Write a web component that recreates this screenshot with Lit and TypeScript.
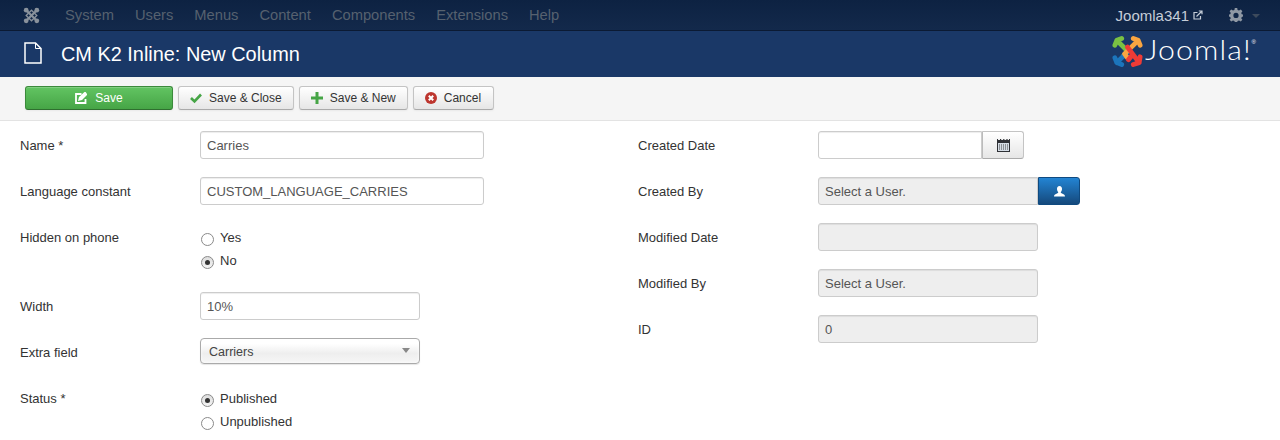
import { LitElement, html, css, svg } from 'lit';
import { customElement } from 'lit/decorators.js';

// joomla mark, four interlocking arms
const joomlaMark = (a: string, b: string, c: string, d: string) => svg`
  <g fill="none" stroke-linecap="round" stroke-linejoin="round" stroke-width="5">
    <path stroke="${a}" d="M3 10 L5 5 L10 3 M5 5 L16 16 L12 21" />
    <path stroke="${c}" d="M3 23 L5 28 L10 30 M5 28 L18 15" />
    <path stroke="${b}" d="M22 3 L27 5 L29 10 M27 5 L13 19 L16 23" />
    <path stroke="${d}" d="M29 22 L28 28 L22 30 M28 28 L16 12 M21 20 L17 25" />
  </g>
`;

const menu = ['System', 'Users', 'Menus', 'Content', 'Components', 'Extensions', 'Help'];

@customElement('app-root')
export class AppRoot extends LitElement {
  static styles = css`
    :host {
      display: block;
      width: 1280px;
      height: 440px;
      overflow: hidden;
      background: #fff;
      font-family: 'Liberation Sans', Arial, sans-serif;
      font-size: 13px;
      color: #333;
    }

    /* top bar */
    .navbar {
      height: 30px;
      display: flex;
      align-items: center;
      padding: 0 20px 0 23px;
      background: linear-gradient(to bottom, #0d2242, #13294b);
      border-bottom: 1px solid #0b1a33;
    }
    .brand { width: 17px; height: 17px; display: block; }
    .menu {
      display: flex;
      gap: 21px;
      margin-left: 25px;
      font-size: 14.7px;
      color: #56616f;
    }
    .right {
      margin-left: auto;
      display: flex;
      align-items: center;
      font-size: 15px;
      color: #c5cdd8;
    }
    .ext { width: 10px; height: 10px; margin-left: 4px; }
    .gear { width: 14px; height: 14px; margin-left: 26px; }
    .caret {
      margin-left: 9px;
      margin-top: 2px;
      border: 4px solid transparent;
      border-top-color: #3d4a5c;
      border-bottom: 0;
    }

    /* title bar */
    .header {
      height: 46px;
      display: flex;
      align-items: center;
      padding: 0 24px 0 24px;
      background: #1a3867;
      color: #fff;
    }
    .page-icon { width: 18px; height: 22px; margin-right: 19px; margin-top: -3px; }
    .title { font-size: 19.9px; line-height: 24px; margin-top: -1px; }
    .logo {
      margin-left: auto;
      display: flex;
      align-items: flex-start;
      margin-top: -6px;
    }
    .logo svg { width: 31px; height: 32px; }
    .wordmark {
      font-family: Lato, 'Liberation Sans', sans-serif;
      font-weight: 300;
      font-size: 27px;
      line-height: 30px;
      margin-left: 2px;
      letter-spacing: 1px;
      transform: scaleX(1.12);
      transform-origin: left;
    }
    .reg { font-size: 6px; line-height: 8px; margin: 3px 0 0 11px; }

    /* toolbar */
    .toolbar {
      display: flex;
      align-items: flex-start;
      gap: 5px;
      padding: 9px 0 0 25px;
      box-sizing: border-box;
      background: #f5f5f5;
      border-bottom: 1px solid #e3e3e3;
      height: 44px;
    }
    .btn {
      height: 22px;
      display: flex;
      align-items: center;
      justify-content: center;
      border: 1px solid #c4c4c4;
      border-bottom-color: #aaa;
      border-radius: 3px;
      background: linear-gradient(to bottom, #fff, #e6e6e6);
      box-shadow: inset 0 1px 0 rgba(255, 255, 255, 0.2), 0 1px 2px rgba(0, 0, 0, 0.05);
      font-size: 12px;
      color: #333;
      padding: 0 11px;
    }
    .btn svg { width: 12px; height: 12px; margin-right: 7px; }
    .btn.save {
      width: 146px;
      padding: 0;
      color: #fff;
      border-color: #3b8a3b;
      border-bottom-color: #2f6f2f;
      background: linear-gradient(to bottom, #62c462, #46a546);
    }
    .btn.save svg { margin-right: 8px; }
    .btn.cancel { padding-right: 12px; }

    /* form */
    .form {
      display: grid;
      grid-template-columns: 638px 1fr;
      padding-top: 10px;
    }
    .col-left { padding-left: 20px; }
    .row {
      display: flex;
      align-items: flex-start;
      margin-bottom: 18px;
      min-height: 28px;
    }
    .label {
      width: 180px;
      flex: none;
      line-height: 30px;
      height: 28px;
      color: #333;
    }
    .input {
      box-sizing: border-box;
      height: 28px;
      line-height: 26px;
      padding: 1px 6px 0;
      border: 1px solid #ccc;
      border-radius: 3px;
      background: #fff;
      box-shadow: inset 0 1px 1px rgba(0, 0, 0, 0.075);
      color: #555;
    }
    .w284 { width: 284px; }
    .w220 { width: 220px; }
    .ro { background: #eee; }
    .select {
      box-sizing: border-box;
      width: 220px;
      height: 26px;
      line-height: 24px;
      padding: 1px 9px 0 8px;
      display: flex;
      align-items: center;
      justify-content: space-between;
      border: 1px solid #aaa;
      border-radius: 4px;
      background: linear-gradient(to bottom, #fff 20%, #eee 60%, #f6f6f6);
      box-shadow: inset 0 0 3px #fff, 0 1px 1px rgba(0, 0, 0, 0.1);
      color: #444;
      font-size: 12.5px;
    }
    .select i {
      border: 4px solid transparent;
      border-top: 5px solid #888;
      border-bottom: 0;
      margin-top: -3px;
    }
    .radios { display: flex; flex-direction: column; gap: 5px; padding: 6px 0 4px; }
    .radio { display: flex; align-items: flex-start; height: 18px; line-height: 18px; }
    .dot {
      box-sizing: border-box;
      width: 13px;
      height: 13px;
      margin: 4px 6px 0 1px;
      border: 1px solid #8a8a8a;
      border-radius: 50%;
      background: #fff;
      display: flex;
      align-items: center;
      justify-content: center;
    }
    .dot.on { background: linear-gradient(#ddd, #f4f4f4); }
    .dot.on::after {
      content: '';
      width: 5px;
      height: 5px;
      border-radius: 50%;
      background: #333;
    }
    .group { display: flex; }
    .group .input { border-radius: 3px 0 0 3px; }
    .date { width: 164px; }
    .addon {
      box-sizing: border-box;
      height: 28px;
      width: 42px;
      display: flex;
      align-items: center;
      justify-content: center;
      border: 1px solid #c4c4c4;
      border-left-color: #bbb;
      border-bottom-color: #aaa;
      border-radius: 0 3px 3px 0;
      background: linear-gradient(to bottom, #fff, #e6e6e6);
    }
    .addon svg { width: 13px; height: 13px; }
    .addon.user {
      border: 1px solid #0f4a80;
      background: linear-gradient(to bottom, #2384d3, #15497c);
    }
  `;

  private field(label: string, body: unknown) {
    return html`<div class="row"><div class="label">${label}</div>${body}</div>`;
  }

  private radio(text: string, on = false) {
    return html`<div class="radio"><span class="dot ${on ? 'on' : ''}"></span>${text}</div>`;
  }

  render() {
    const userIcon = html`<svg viewBox="0 0 13 13"><path fill="#fff" d="M6.5 1C8.2 1 9.2 2.4 9 4.2 8.9 5.6 8.2 6.7 7.8 7.1 7.6 7.9 8.2 8.2 9.5 8.8 11 9.4 12 9.9 12 11.5H1C1 9.9 2 9.4 3.5 8.8 4.8 8.2 5.4 7.9 5.2 7.1 4.8 6.7 4.1 5.6 4 4.2 3.8 2.4 4.8 1 6.5 1Z"/></svg>`;
    return html`
      <div class="navbar">
        <svg class="brand" viewBox="0 0 32 32">
          <g fill="none" stroke="#8a929c">
            <path stroke-width="4" d="M5 5L27 27M27 5L5 27" />
            <path stroke-width="2.5" d="M16 6L26 16 16 26 6 16Z" />
          </g>
          <g fill="#8a929c">
            <circle cx="6" cy="6" r="4.5" /><circle cx="26" cy="6" r="4.5" />
            <circle cx="6" cy="26" r="4.5" /><circle cx="26" cy="26" r="4.5" />
          </g>
        </svg>
        <div class="menu">${menu.map((m) => html`<span>${m}</span>`)}</div>
        <div class="right">
          <span>Joomla341</span>
          <svg class="ext" viewBox="0 0 10 10" fill="none" stroke="#c5cdd8" stroke-width="1.2">
            <path d="M7.5 6V9H1V2.5H4.5" /><path d="M3.5 6.5L8.5 1.5M5.8 1H9V4.2" />
          </svg>
          <svg class="gear" viewBox="0 0 14 14">
            <path fill="#8f98a4" fill-rule="evenodd" d="M5.8 0H8.2L8.6 2 10 2.6 11.8 1.5 13.4 3.2 12.2 4.9 12.8 6.2 14 6.6V8.4L12.8 8.9 12.2 10.2 13.4 11.8 11.8 13.4 10 12.4 8.6 12.9 8.2 14H5.8L5.4 12.9 4 12.4 2.2 13.4 .6 11.8 1.8 10.2 1.2 8.9 0 8.4V6.6L1.2 6.2 1.8 4.9 .6 3.2 2.2 1.5 4 2.6 5.4 2ZM7 4.8A2.6 2.6 0 1 0 7 10 2.6 2.6 0 1 0 7 4.8Z"/>
          </svg>
          <span class="caret"></span>
        </div>
      </div>

      <div class="header">
        <svg class="page-icon" viewBox="0 0 18 22" fill="none" stroke="#fff" stroke-width="1.5">
          <path d="M1 1H11.5L17 6.5V21H1Z" /><path d="M11.5 1V6.5H17" stroke-width="1" />
        </svg>
        <div class="title">CM K2 Inline: New Column</div>
        <div class="logo">
          <svg viewBox="0 0 32 32">${joomlaMark('#7ac143', '#f9a541', '#1c75bc', '#ee3b36')}</svg>
          <span class="wordmark">Joomla!</span>
          <span class="reg">®</span>
        </div>
      </div>

      <div class="toolbar">
        <div class="btn save">
          <svg viewBox="0 0 12 12" fill="none" stroke="#fff" stroke-width="1.8">
            <path d="M10.5 7V11H1V2H6.5" /><path stroke-width="2.2" d="M4.5 7.5L5 5.5 10 1 11 2.5 6.5 7Z" />
          </svg>Save
        </div>
        <div class="btn">
          <svg viewBox="0 0 12 12"><path fill="none" stroke="#46a546" stroke-width="2.6" d="M1 6L4.5 9.5 11 2.5" /></svg>Save &amp; Close
        </div>
        <div class="btn">
          <svg viewBox="0 0 12 12"><path fill="#46a546" d="M4.5 0H7.5V4.5H12V7.5H7.5V12H4.5V7.5H0V4.5H4.5Z" /></svg>Save &amp; New
        </div>
        <div class="btn cancel">
          <svg viewBox="0 0 12 12">
            <circle cx="6" cy="6" r="6" fill="#bd362f" />
            <path stroke="#fff" stroke-width="2" d="M3.8 3.8L8.2 8.2M8.2 3.8L3.8 8.2" />
          </svg>Cancel
        </div>
      </div>

      <div class="form">
        <div class="col-left">
          ${this.field('Name *', html`<div class="input w284">Carries</div>`)}
          ${this.field('Language constant', html`<div class="input w284">CUSTOM_LANGUAGE_CARRIES</div>`)}
          ${this.field('Hidden on phone', html`<div class="radios">${this.radio('Yes')}${this.radio('No', true)}</div>`)}
          ${this.field('Width', html`<div class="input w220">10%</div>`)}
          ${this.field('Extra field', html`<div class="select">Carriers<i></i></div>`)}
          ${this.field('Status *', html`<div class="radios">${this.radio('Published', true)}${this.radio('Unpublished')}</div>`)}
        </div>
        <div>
          ${this.field('Created Date', html`<div class="group">
            <div class="input date"></div>
            <div class="addon">
              <svg viewBox="0 0 13 13">
                <path fill="#2f3136" d="M0 0H13V13H0Z" />
                <path stroke="#f3f3f3" stroke-dasharray="2 1.2" d="M1 .5H12" />
                <path fill="#d5dde6" d="M1 4H12V12H1Z" />
                <path stroke="#444" stroke-dasharray="1 1" d="M2 6H11M2 8H11M2 10H11" />
              </svg>
            </div>
          </div>`)}
          ${this.field('Created By', html`<div class="group">
            <div class="input ro w220">Select a User.</div>
            <div class="addon user">${userIcon}</div>
          </div>`)}
          ${this.field('Modified Date', html`<div class="input ro w220"></div>`)}
          ${this.field('Modified By', html`<div class="input ro w220">Select a User.</div>`)}
          ${this.field('ID', html`<div class="input ro w220">0</div>`)}
        </div>
      </div>
    `;
  }
}
